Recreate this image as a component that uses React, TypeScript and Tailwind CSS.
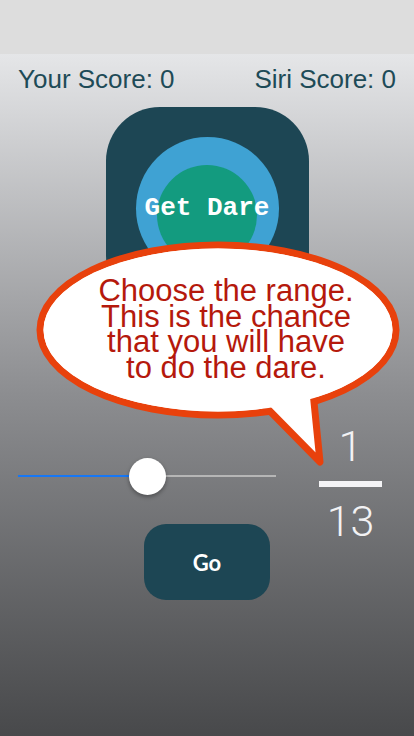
import React from "react";

const SANS = { fontFamily: '"Liberation Sans", Arial, sans-serif' };

function Bubble() {
  // speech bubble drawing, lies over the Get Dare button
  return (
    <svg
      className="pointer-events-none absolute left-0 top-0"
      width={414}
      height={736}
      viewBox="0 0 414 736"
    >
      <ellipse cx={218} cy={330} rx={178} ry={85} fill="#fff" stroke="#e8410c" strokeWidth={7} />
      <polygon
        points="257,398 320,462 313,392"
        fill="#fff"
        stroke="#e8410c"
        strokeWidth={7}
        strokeLinejoin="round"
      />
      <ellipse cx={218} cy={330} rx={174.5} ry={81.5} fill="#fff" />
    </svg>
  );
}

export default function App() {
  return (
    <div className="relative flex h-[736px] w-[414px] flex-col overflow-hidden" style={SANS}>
      <div className="h-[54px] shrink-0 bg-[#dddddd]" />

      <main className="flex flex-1 flex-col bg-gradient-to-b from-[#e5e6e8] via-[#8c8d90] to-[#48494b]">
        <div className="mt-[10px] flex justify-between px-[18px] text-[26px] leading-[30px] text-[#1e4b57]">
          <span>Your Score: 0</span>
          <span>Siri Score: 0</span>
        </div>

        <div className="mt-[13px] flex justify-center">
          <button
            type="button"
            className="flex h-[203px] w-[203px] items-center justify-center rounded-[54px] bg-[#1d4654]"
          >
            <div className="relative flex h-[143px] w-[143px] items-center justify-center rounded-full bg-[#3fa2d3]">
              <div className="mt-[12px] h-[100px] w-[100px] rounded-full bg-[#139b7f]" />
              <span
                className="absolute inset-0 flex items-center justify-center text-[26px] font-bold text-white"
                style={{ fontFamily: '"Liberation Mono", "Courier New", monospace' }}
              >
                Get Dare
              </span>
            </div>
          </button>
        </div>

        <div className="mt-[112px] flex h-[102px] items-start">
          <div className="relative ml-[18px] mt-[53px] flex h-[2px] w-[258px]">
            <div className="h-[2px] w-[129px] bg-[#1677f5]" />
            <div className="h-[2px] flex-1 bg-[#b6b6b6]" />
            <div className="absolute left-[111px] top-[-17px] h-[37px] w-[37px] rounded-full bg-white shadow-[0_2px_4px_rgba(0,0,0,0.35)]" />
          </div>
          <div
            className="ml-[43px] flex w-[63px] flex-col items-center font-light text-[#f2f2f4]"
            style={{ fontFamily: 'Roboto, "Open Sans", sans-serif' }}
          >
            <span className="text-[43px] leading-[48px]">1</span>
            <div className="mt-[11px] h-[6px] w-[63px] bg-[#f4f4f6]" />
            <span className="mt-[10px] text-[43px] leading-[48px]">13</span>
          </div>
        </div>

        <div className="flex justify-center">
          <button
            type="button"
            className="flex h-[76px] w-[126px] items-center justify-center rounded-[22px] bg-[#1d4654] text-[22px] font-bold text-white"
            style={{ fontFamily: 'Lato, "Open Sans", sans-serif' }}
          >
            Go
          </button>
        </div>
      </main>

      <Bubble />
      <p className="absolute left-[36px] top-[278px] w-[380px] text-center text-[31px] leading-[25.5px] text-[#b5190c]">
        Choose the range.
        <br />
        This is the chance
        <br />
        that you will have
        <br />
        to do the dare.
      </p>
    </div>
  );
}
